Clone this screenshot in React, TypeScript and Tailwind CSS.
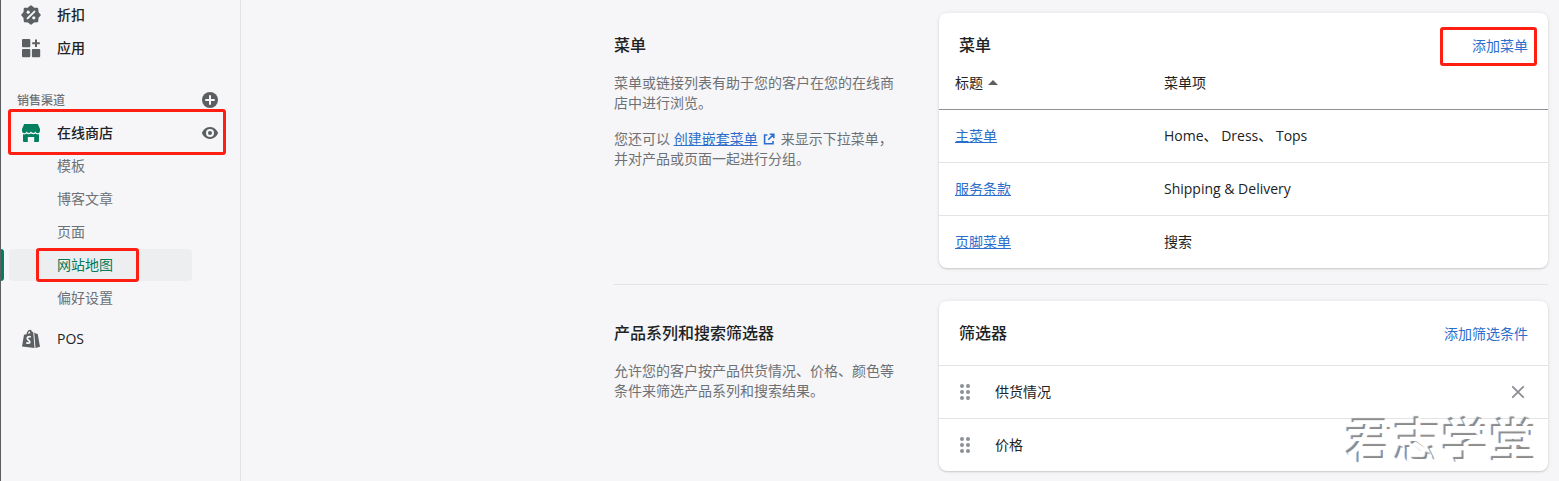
import React from "react";

const subItems = [
  { label: "模板" },
  { label: "博客文章" },
  { label: "页面" },
  { label: "网站地图", active: true },
  { label: "偏好设置" },
];

const menus = [
  { title: "主菜单", items: "Home、 Dress、 Tops" },
  { title: "服务条款", items: "Shipping & Delivery" },
  { title: "页脚菜单", items: "搜索" },
];

const filters = ["供货情况", "价格"];

const iconProps = {
  viewBox: "0 0 20 20",
  className: "h-5 w-5 shrink-0",
  fill: "currentColor",
  "aria-hidden": true,
};

const DiscountIcon = () => (
  <svg {...iconProps}>
    <path
      d="M10 1l2.500 2.200 3.900.4.400 3.900L19 10l-2.200 2.500-.4 3.900-3.900.4L10 19l-2.500-2.200-3.900-.4-.4-3.900L1 10l2.200-2.500.4-3.900 3.900-.4z"
      stroke="currentColor"
      strokeWidth="1.600"
      strokeLinejoin="round"
    />
    <path d="M6.600 13.400l6.800-6.800" stroke="#f6f6f8" strokeWidth="2" strokeLinecap="round" />
    <circle cx="7.200" cy="7.200" r="1.600" fill="#f6f6f8" />
    <circle cx="12.800" cy="12.800" r="1.600" fill="#f6f6f8" />
  </svg>
);

const AppsIcon = () => (
  <svg {...iconProps}>
    <rect x="1" y="1" width="8.300" height="8.300" rx="1" />
    <rect x="1" y="10.900" width="8.300" height="8.300" rx="1" />
    <rect x="10.900" y="10.900" width="8.300" height="8.300" rx="1" />
    <path d="M15 1.500v7.600M11.200 5.300h7.600" stroke="currentColor" strokeWidth="2" />
  </svg>
);

const StoreIcon = () => (
  <svg {...iconProps}>
    <path d="M3.200 1h13.600L19 6v2a2.300 2.300 0 0 1-4.500.6 2.600 2.600 0 0 1-4.500 0 2.600 2.600 0 0 1-4.500 0A2.300 2.300 0 0 1 1 8V6z" />
    <path d="M2 11.300c1.400.3 2.600 0 3.500-.8 1.400 1.100 3.100 1.100 4.500 0 1.400 1.100 3.100 1.100 4.500 0 .9.8 2.100 1.100 3.500.8V18a1 1 0 0 1-1 1h-3.800v-5H6.800v5H3a1 1 0 0 1-1-1z" />
  </svg>
);

const PosIcon = () => (
  <svg {...iconProps}>
    <path d="M3 5.800l2.500-.6C6 2.500 7.400.8 9 .8c1 0 1.700.8 2 2l1.200.3 1.300 15.900-12.500-1.500zM7 4.800l2.200-.6c0-1-.2-1.600-.6-1.900-.8.3-1.300 1.200-1.600 2.500z" fillRule="evenodd" />
    <path d="M13.200 3.400l1.600 1.100 1.900.4L19 17.800 14.500 19z" />
    <path d="M9.800 8c-1.800-.8-3.700.1-3.500 1.600.2 1.500 2.500 1.700 2.500 3.300 0 1.500-2 1.700-3.500.6" fill="none" stroke="#f6f6f8" strokeWidth="1.800" />
  </svg>
);

const PlusIcon = () => (
  <svg {...iconProps}>
    <circle cx="10" cy="10" r="8" />
    <path d="M10 6v8M6 10h8" stroke="#f6f6f8" strokeWidth="2" strokeLinecap="round" />
  </svg>
);

const EyeIcon = () => (
  <svg {...iconProps}>
    <path d="M18 9.700C17.900 9.400 15.600 4 10 4S2.100 9.400 2 9.700a1 1 0 0 0 0 .6C2.100 10.600 4.400 16 10 16s7.900-5.400 8-5.700a1 1 0 0 0 0-.6zM10 14a4 4 0 1 1 0-8 4 4 0 0 1 0 8z" />
    <circle cx="10" cy="10" r="2" />
  </svg>
);

const ExternalIcon = () => (
  <svg viewBox="0 0 20 20" className="ml-[3px] mr-1 inline h-4 w-4 align-[-3px]" fill="none" stroke="currentColor" strokeWidth="2" aria-hidden="true">
    <path d="M8 5H4.500v11H15v-3.500M11 4h5v5M15.500 4.500L9 11" />
  </svg>
);

const DragIcon = () => (
  <svg {...iconProps}>
    {[4, 10, 16].map((y) => (
      <React.Fragment key={y}>
        <circle cx="7" cy={y} r="2" />
        <circle cx="13" cy={y} r="2" />
      </React.Fragment>
    ))}
  </svg>
);

const CloseIcon = () => (
  <svg {...iconProps}>
    <path d="M4.800 4.800l10.400 10.400M15.200 4.800L4.800 15.200" stroke="currentColor" strokeWidth="1.900" strokeLinecap="round" />
  </svg>
);

// Red frame drawn over the thing it points at
const Highlight = ({ className }: { className: string }) => (
  <span className={`pointer-events-none absolute z-10 rounded-[3px] border-3 border-[#ff1f12] ${className}`} />
);

const NavLink = ({ icon, label }: { icon: React.ReactNode; label: string }) => (
  <a href="#" className="mx-2 flex h-8 items-center gap-4 px-3 font-medium text-[#202223]">
    <span className="text-[#5c5f62]">{icon}</span>
    {label}
  </a>
);

const Sidebar = () => (
  <nav className="flex w-[241px] shrink-0 flex-col gap-px border-x border-l-[#5c5f62] border-r-[#e1e3e5]">
    <div className="-mt-px flex flex-col gap-px">
      <NavLink icon={<DiscountIcon />} label="折扣" />
      <NavLink icon={<AppsIcon />} label="应用" />
    </div>

    <div className="mx-2 mt-[19px] flex h-8 items-center justify-between pl-2 pr-3 text-[#6d7175]">
      <h2 className="pt-0.5 text-xs font-medium">销售渠道</h2>
      <button type="button" aria-label="添加销售渠道" className="text-[#5c5f62]">
        <PlusIcon />
      </button>
    </div>

    <div className="relative mx-2 flex h-8 items-center justify-between px-3">
      <a href="#" className="flex items-center gap-4 font-medium text-[#202223]">
        <span className="text-[#008060]">
          <StoreIcon />
        </span>
        在线商店
      </a>
      <button type="button" aria-label="查看在线商店" className="text-[#5c5f62]">
        <EyeIcon />
      </button>
      <Highlight className="-left-px right-[6px] -top-2 -bottom-[6px]" />
    </div>

    <ul className="flex flex-col gap-px">
      {subItems.map((item) => (
        <li key={item.label} className="relative ml-2 mr-12">
          {item.active && <span className="absolute -left-2 top-0 h-8 w-[3px] rounded-r-sm bg-[#008060]" />}
          <a
            href="#"
            className={`flex h-8 items-center rounded pl-12 ${
              item.active ? "bg-[#edeeef] text-[#007a5c]" : "text-[#6d7175]"
            }`}
          >
            {item.label}
          </a>
          {item.active && <Highlight className="-inset-y-px left-[27px] w-[103px]" />}
        </li>
      ))}
    </ul>

    <div className="mt-2">
      <NavLink icon={<PosIcon />} label="POS" />
    </div>
  </nav>
);

const Section = ({ title, text, children }: { title: string; text: React.ReactNode; children: React.ReactNode }) => (
  <section className="flex gap-10 py-4">
    <div className="w-[285px] shrink-0 pt-5 text-[#6d7175]">
      <h2 className="text-base font-medium text-[#202223]">{title}</h2>
      <div className="mt-4 space-y-4">{text}</div>
    </div>
    <div className="relative min-w-0 flex-1 rounded-lg bg-white shadow-[0_0_5px_rgba(23,24,24,0.06),0_1px_2px_rgba(0,0,0,0.16)]">
      {children}
    </div>
  </section>
);

const CardHeader = ({ title, action, children }: { title: string; action: string; children?: React.ReactNode }) => (
  <div className="relative flex items-center justify-between px-5 pt-5">
    <h3 className="text-base font-medium">{title}</h3>
    <button type="button" className="pt-0.5 text-[#2c6ecb]">
      {action}
    </button>
    {children}
  </div>
);

const MenuTable = () => (
  <table className="w-full table-fixed border-separate border-spacing-0 text-left">
    <thead>
      <tr>
        <th className="w-[209px] border-b border-[#8c9196] p-4 font-normal">
          <button type="button" className="flex items-center gap-1">
            标题
            <svg viewBox="0 0 12 8" className="h-2 w-3" fill="#5c5f62" aria-hidden="true">
              <path d="M1 6l5-5 5 5z" />
            </svg>
          </button>
        </th>
        <th className="border-b border-[#8c9196] p-4 font-normal">菜单项</th>
      </tr>
    </thead>
    <tbody className="[&>tr:last-child>td]:border-b-0">
      {menus.map((menu) => (
        <tr key={menu.title}>
          <td className="border-b border-[#e1e3e5] p-4">
            <a href="#" className="text-[#2c6ecb] underline">
              {menu.title}
            </a>
          </td>
          <td className="border-b border-[#e1e3e5] p-4">{menu.items}</td>
        </tr>
      ))}
    </tbody>
  </table>
);

const App = () => {
  return (
    <div className="flex min-h-screen bg-[#f6f6f8] font-['Open_Sans','Noto_Sans_CJK_SC',sans-serif] text-sm/5 text-[#202223]">
      <Sidebar />
      <main className="flex min-w-0 flex-1 justify-end pr-[11px]">
        <div className="-mt-[3px] w-full max-w-[934px] divide-y divide-[#e1e3e5]">
          <Section
            title="菜单"
            text={
              <>
                <p>菜单或链接列表有助于您的客户在您的在线商店中进行浏览。</p>
                <p>
                  您还可以{" "}
                  <a href="#" className="text-[#2c6ecb]">
                    <span className="underline">创建嵌套菜单</span>
                    <ExternalIcon />
                  </a>
                  来显示下拉菜单，
                  <br />
                  并对产品或页面一起进行分组。
                </p>
              </>
            }
          >
            <CardHeader title="菜单" action="添加菜单">
              <Highlight className="right-[11px] top-[14px] h-[39px] w-[97px]" />
            </CardHeader>
            <MenuTable />
          </Section>

          <Section
            title="产品系列和搜索筛选器"
            text={<p>允许您的客户按产品供货情况、价格、颜色等条件来筛选产品系列和搜索结果。</p>}
          >
            <CardHeader title="筛选器" action="添加筛选条件" />
            <ul className="pt-5">
              {filters.map((name) => (
                <li key={name} className="flex items-center border-t border-[#e1e3e5] py-4 pl-4 pr-5">
                  <button type="button" aria-label={`移动${name}`} className="text-[#8c9196]">
                    <DragIcon />
                  </button>
                  <span className="ml-5 flex-1">{name}</span>
                  <button type="button" aria-label={`删除${name}`} className="text-[#8c9196]">
                    <CloseIcon />
                  </button>
                </li>
              ))}
            </ul>
            <div className="pointer-events-none absolute bottom-0.5 right-2.5 text-5xl/[56px] font-medium text-white [text-shadow:-2px_-2px_1px_#8a8a8a]">
              君志学堂
            </div>
          </Section>
        </div>
      </main>
    </div>
  );
};

export default App;
